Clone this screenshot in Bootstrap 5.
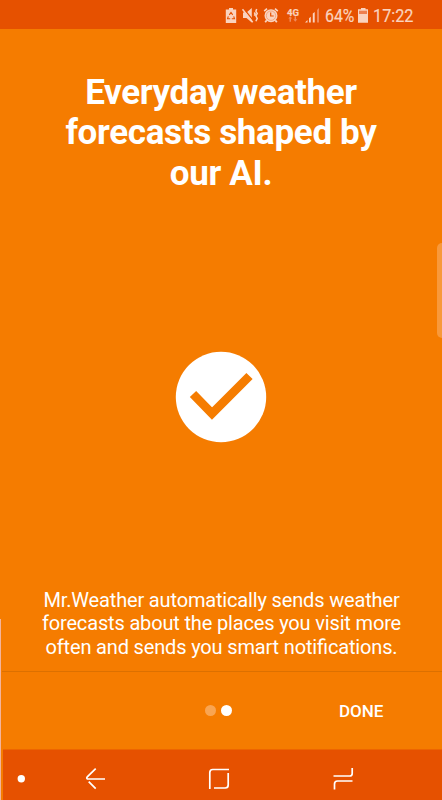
<!DOCTYPE html>
<html lang="en">
<head>
<meta charset="utf-8">
<meta name="viewport" content="width=device-width, initial-scale=1">
<title>Mr.Weather</title>
<link href="https://cdn.jsdelivr.net/npm/bootstrap@5.3.0/dist/css/bootstrap.min.css" rel="stylesheet">
<style>
body{font-family:Roboto,"Liberation Sans",sans-serif;background:#f57c00;color:#fff}
.screen{height:800px;width:442px}
.status{height:29px;background:#e65100;color:#fad3bf;padding-left:225px}
.status svg,.softkeys svg{display:block;flex:none}
.status text{font-size:18.3px;fill:#fad3bf;stroke:#fad3bf;stroke-width:.2px}
.headline{font-size:35px;line-height:40.6px;font-weight:700;padding-top:43.7px;height:166px;letter-spacing:-.34px}
.hero{height:392px;padding-top:156px}
.blurb{font-size:20px;line-height:23.4px;height:84px;padding-top:2px;padding-left:1px;letter-spacing:-.16px;font-feature-settings:"liga" 1}
.footer-bar{height:78px;border-top:1px solid #dc7000;margin-left:2px}
.dots{gap:5px;padding-left:203px}
.page-dot{width:11px;height:11px;background:#f9a552}
.page-dot.current{background:#fff}
.done{font-size:17px;font-weight:500;line-height:20px;color:#fff;margin-left:107px;padding-top:1px!important}
.softkeys{height:51px;background:#e65100;margin-left:3px;padding-top:1px;border-top:1px solid #ee6500}
.edge-handle{right:0;top:243px;width:5px;height:95px;background:#f8993b;border-radius:5px 0 0 5px}
.side-line{left:0;top:619px;width:1px;height:181px;background:#f3b49c}
</style>
<script src="https://cdn.jsdelivr.net/npm/bootstrap@5.3.0/dist/js/bootstrap.bundle.min.js"></script>
</head>
<body class="m-0 overflow-hidden">
<div class="screen position-relative d-flex flex-column overflow-hidden">
  <header class="status d-flex align-items-start flex-shrink-0">
    <svg width="217" height="29" viewBox="225 0 217 29" fill="#fad3bf">
      <!-- battery saver -->
      <path d="M229 8h4v1.600h3.200v13.400h-10.400V9.600H229z"/>
      <path d="M229.300 14.800l1.700-2.300 1.700 2.300M233.700 16.300l.8 2.500h-2.700M228.300 16.300l-.8 2.500h2.700" fill="none" stroke="#e65100" stroke-width="1.100"/>
      <!-- vibrate / muted -->
      <path d="M243 12.500h3.500l5.300-4.500v14.500l-5.300-4.500h-3.500z"/>
      <path d="M243.500 8.500l11 13.500" stroke="#e65100" stroke-width="1.300"/>
      <path d="M242.500 9.300l10.200 12.900" stroke="#fad3bf" stroke-width="1.500"/>
      <path d="M254.300 12.500l.9 1.500-.9 1.700M256.700 9l-.8 2.300 1.300 2.300-1.300 2.300 1.300 2.500-1.300 2.800" fill="none" stroke="#fad3bf" stroke-width="1.500"/>
      <!-- alarm -->
      <path d="M264.200 11.200l2.800-2.500M277.800 11.200l-2.800-2.500" stroke="#fad3bf" stroke-width="1.700"/>
      <path d="M266.700 20.300l-1.500 2M275.300 20.300l1.500 2" stroke="#fad3bf" stroke-width="1.800"/>
      <circle cx="271" cy="15.700" r="6.500"/>
      <circle cx="271" cy="15.700" r="4.700" fill="none" stroke="#ef8b5d" stroke-width=".6"/>
      <path d="M270.700 12.500v3.500h3" fill="none" stroke="#e65100" stroke-width="1.200"/>
      <!-- mobile data -->
      <text x="287" y="15.500" textLength="12" lengthAdjust="spacingAndGlyphs" style="font-size:9.500px;font-weight:700">4G</text>
      <path d="M288.300 18.500l2-2.200 2 2.200h-1.300v3.300h-1.500v-3.300zM293.300 19.300l2 2.500 2-2.500h-1.300v-3h-1.400v3z" fill="#ef8b5d"/>
      <!-- signal -->
      <path d="M305 22.500l2.500-2.500v2.500zM309 18.200l1.800-1.400v5.700H309zM312.800 13.500l1.900-1.500v10.500h-1.900z"/>
      <path d="M317 10l2-2v14.500h-2z" fill="#ef8b5d"/>
      <text x="325" y="22" textLength="29.500" lengthAdjust="spacingAndGlyphs">64%</text>
      <!-- battery -->
      <path d="M361 8h4.500v1.200h2.500V22.800h-10V9.200h3z"/>
      <path d="M359 10.700h8v3.300h-8z" fill="#ee8050"/>
      <text x="373" y="22" textLength="40.500" lengthAdjust="spacingAndGlyphs">17:22</text>
    </svg>
  </header>
  <main class="text-center flex-shrink-0">
    <h1 class="headline m-0">Everyday weather<br>forecasts shaped by<br>our AI.</h1>
    <div class="hero d-flex justify-content-center align-items-start">
      <svg width="92" height="92" viewBox="175 350.500 92 92"><circle cx="221" cy="396.500" r="45.200" fill="#fff"/><path d="M193 393.500l19 19.500 37.500-37.500" fill="none" stroke="#f57c00" stroke-width="8.800"/></svg>
    </div>
    <p class="blurb m-0">Mr.Weather automatically sends weather<br>forecasts about the places you visit more<br>often and sends you smart notifications.</p>
  </main>
  <section class="footer-bar d-flex align-items-center flex-shrink-0">
    <div class="dots d-flex"><span class="page-dot rounded-circle"></span><span class="page-dot current rounded-circle"></span></div>
    <button class="done btn p-0 border-0">DONE</button>
  </section>
  <nav class="softkeys d-flex flex-shrink-0">
    <svg width="439" height="49" viewBox="3 751 439 49" fill="none" stroke="#fff" stroke-width="1.700">
      <circle cx="21.300" cy="778.800" r="3.700" fill="#fff" stroke="none"/>
      <path d="M105 779H87.500q-1.500-.8 0-2.300l8.200-8M88.700 781.700l7 7"/>
      <path d="M209.800 789v-16.500q0-3 3-3H229M228.200 773v12q0 3-3 3H214"/>
      <path d="M352.200 768v5.500q0 2.500-2.500 2.500H333.500M334.500 789.500V784q0-3 3-3H352.500"/>
    </svg>
  </nav>
  <div class="edge-handle position-absolute"></div>
  <div class="side-line position-absolute"></div>
</div>
</body>
</html>
